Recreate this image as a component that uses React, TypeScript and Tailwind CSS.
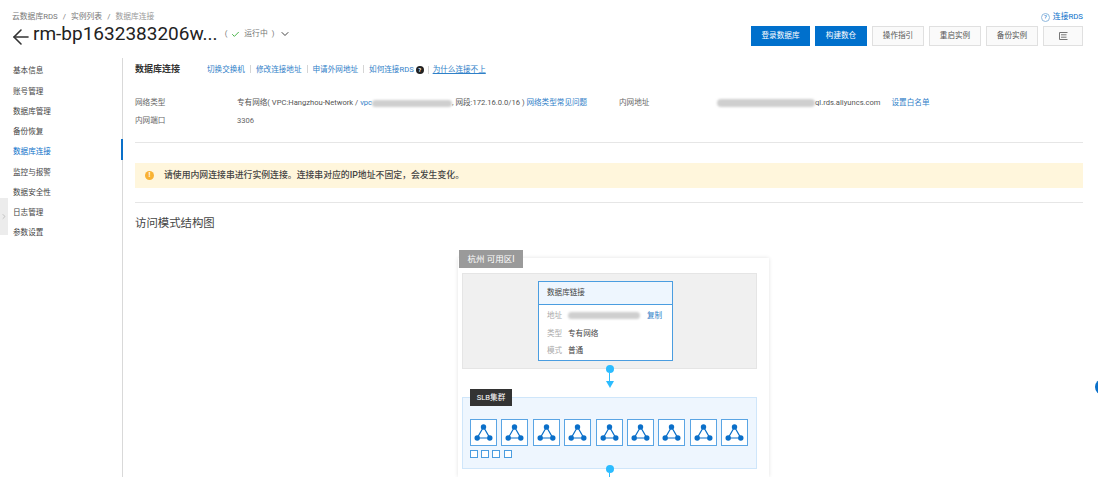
import { ArrowLeft, Check, ChevronDown, ChevronRight } from 'lucide-react';

const FONT = "font-['Roboto','Noto_Sans_CJK_SC',sans-serif]";

const menuItems = ['基本信息', '账号管理', '数据库管理', '备份恢复', '数据库连接', '监控与报警', '数据安全性', '日志管理', '参数设置'];
const headerButtons = ['操作指引', '重启实例', '备份实例'];
const tabLinks = ['切换交换机', '修改连接地址', '申请外网地址'];

const Redacted = ({ className }: { className: string }) => (
  <span className={`inline-block rounded-full bg-[#cfcfcf] blur-[1px] ${className}`} />
);

const ClusterIcon = () => (
  <div className="flex h-[27px] w-[27px] items-center justify-center border border-[#5aa5e4] bg-white">
    <svg width="19" height="19" viewBox="0 0 19 19" fill="none">
      <path d="M9.5 4 L3.2 15 H15.8 Z" stroke="#0a6fc9" strokeWidth="1.2" />
      <circle cx="9.5" cy="4" r="2.7" fill="#0a6fc9" />
      <circle cx="3.2" cy="15" r="2.7" fill="#0a6fc9" />
      <circle cx="15.8" cy="15" r="2.7" fill="#0a6fc9" />
    </svg>
  </div>
);

const Connector = ({ arrow }: { arrow?: boolean }) => (
  <div className="relative z-10 -mt-[4px] flex w-[295px] flex-col items-center">
    <div className="h-[8px] w-[8px] rounded-full bg-[#2bbcff]" />
    <div className="h-[8px] w-[1.5px] bg-[#2bbcff]" />
    {arrow && (
      <div className="h-0 w-0 border-x-[4px] border-t-[7px] border-x-transparent border-t-[#2bbcff]" />
    )}
  </div>
);

const DbRow = ({ label, children }: { label: string; children: React.ReactNode }) => (
  <div className="flex h-[17.5px] items-center">
    <span className="w-[20px] shrink-0 text-[#aaa]">{label}</span>
    {children}
  </div>
);

export default function App() {
  return (
    <div className={`relative h-[477px] w-[1098px] overflow-hidden bg-white text-[#555] ${FONT}`}>
      <header className="relative h-[58px] pl-[12px] pr-[15px]">
        <div className="flex items-center pt-[12px] text-[7.8px] leading-[10px] text-[#777]">
          <span>云数据库RDS</span>
          <span className="mx-[5px]">/</span>
          <span>实例列表</span>
          <span className="mx-[5px]">/</span>
          <span className="text-[#999]">数据库连接</span>
        </div>
        <div className="mt-[1px] flex h-[22px] items-center">
          <ArrowLeft size={24} strokeWidth={1.6} className="-ml-[3px] mt-[5px] shrink-0 text-[#333]" />
          <span className="text-[19px] leading-[22px] text-[#222]">rm-bp1632383206w...</span>
          <span className="ml-[7px] flex items-center text-[7.8px] text-[#777]">
            <span>(</span>
            <Check size={9} strokeWidth={2.5} className="mx-[4px] text-[#3dae3d]" />
            <span>运行中</span>
            <span className="ml-[4px]">)</span>
          </span>
          <ChevronDown size={12} className="ml-[5px] text-[#444]" />
        </div>
        <div className="absolute right-[15px] top-[12px] flex items-center text-[7.8px] leading-[10px] text-[#0a6fc9]">
          <span className="mr-[3px] flex h-[9px] w-[9px] items-center justify-center rounded-full border border-[#8fb8dd] text-[6px]">?</span>
          连接RDS
        </div>
        <div className="absolute right-[15px] top-[26px] flex gap-[5px] text-[7.6px]">
          <button className="h-[20px] w-[59px] bg-[#0070cc] text-white">登录数据库</button>
          <button className="h-[20px] w-[52px] bg-[#0070cc] text-white">构建数仓</button>
          {headerButtons.map((b) => (
            <button key={b} className="h-[20px] w-[52px] border border-[#e0e0e0] bg-[#fafafa] text-[#555]">
              {b}
            </button>
          ))}
          <button className="flex h-[20px] w-[40px] items-center justify-center border border-[#e0e0e0] bg-[#fafafa]">
            <svg width="9" height="8" viewBox="0 0 9 8" fill="none" stroke="#777" strokeWidth="1">
              <path d="M.5 .5 H8.5 M.5 .5 V7.5 H8.5 M2 2.8 H7.5 M2 5.2 H7.5" />
            </svg>
          </button>
        </div>
      </header>

      <div className="flex h-[419px]">
        <nav className="relative w-[123px] shrink-0 border-r border-[#d9d9d9] pl-[13px] pt-[3px] text-[7.6px] text-[#444]">
          {menuItems.map((item) => (
            <div
              key={item}
              className={`flex h-[20.25px] items-center ${item === '数据库连接' ? 'text-[#0a6fc9]' : ''}`}
            >
              {item}
            </div>
          ))}
          <div className="absolute right-[-1px] top-[81px] h-[21px] w-[2px] bg-[#0a70c9]" />
        </nav>

        <main className="flex-1 pl-[12px] pr-[15px]">
          <div className="flex h-[22px] items-center pt-[1px] text-[7.6px] text-[#2f80c8]">
            <span className="w-[72px] text-[9px] font-bold text-[#333]">数据库连接</span>
            {tabLinks.map((link) => (
              <span key={link} className="flex items-center">
                {link}
                <span className="mx-[5px] h-[8px] w-px bg-[#d5d5d5]" />
              </span>
            ))}
            <span>如何连接RDS</span>
            <span className="ml-[2px] flex h-[8px] w-[8px] items-center justify-center rounded-full bg-[#222] text-[6px] font-bold text-white">?</span>
            <span className="mx-[4px] h-[8px] w-px bg-[#d5d5d5]" />
            <span className="underline underline-offset-1">为什么连接不上</span>
          </div>

          <div className="mt-[14px] grid grid-cols-[102px_382px_98px_1fr] text-[7.6px] leading-[18px] text-[#666]">
            <span>网络类型</span>
            <span className="flex items-center whitespace-nowrap text-[#555]">
              专有网络( VPC:Hangzhou-Network /&nbsp;<span className="text-[#2f80c8]">vpc</span>
              <Redacted className="h-[7px] w-[80px]" />
              , 网段:172.16.0.0/16 )&nbsp;<span className="text-[#2f80c8]">网络类型常见问题</span>
            </span>
            <span>内网地址</span>
            <span className="flex items-center whitespace-nowrap text-[#555]">
              <Redacted className="h-[8px] w-[98px]" />
              ql.rds.aliyuncs.com
              <span className="ml-[11px] text-[#2f80c8]">设置白名单</span>
            </span>
            <span>内网端口</span>
            <span>3306</span>
          </div>

          <div className="mt-[12px] h-px bg-[#e6e6e6]" />

          <div className="mt-[20px] flex h-[25px] items-center bg-[#fff6dc] pl-[10px] text-[8.85px] font-medium text-[#444]">
            <span className="mr-[10px] flex h-[9px] w-[9px] items-center justify-center rounded-full bg-[#f9b233] text-[7px] font-bold text-white">!</span>
            请使用内网连接串进行实例连接。连接串对应的IP地址不固定，会发生变化。
          </div>

          <div className="mt-[14px] h-px bg-[#e6e6e6]" />

          <h2 className="mt-[12px] h-[16px] text-[11.4px] leading-[16px] text-[#444]">访问模式结构图</h2>

          <div className="relative ml-[323px] mt-[27px] h-[219px] w-[311px] bg-white px-[4px] pt-[15px] shadow-[0_0_4px_rgba(0,0,0,0.12)]">
            <div className="absolute left-[1px] top-[-8px] flex h-[18px] w-[64px] items-center justify-center bg-[#9a9a9a] text-[8.5px] text-white">
              杭州 可用区I
            </div>

            <div className="h-[96px] w-[295px] border border-[#e5e5e5] bg-[#f0f0f0] pl-[75px] pt-[7px]">
              <div className="h-[80px] w-[135px] border border-[#4a9de0] bg-white text-[7.6px]">
                <div className="flex h-[23px] items-center border-b border-[#4a9de0] bg-[#eef6fe] pl-[8px] text-[#444]">
                  数据库链接
                </div>
                <div className="px-[8px] pt-[2px]">
                  <DbRow label="地址">
                    <Redacted className="ml-[1px] h-[7px] w-[72px]" />
                    <span className="ml-[7px] text-[#2f80c8]">复制</span>
                  </DbRow>
                  <DbRow label="类型">
                    <span className="ml-[1px] text-[#444]">专有网络</span>
                  </DbRow>
                  <DbRow label="模式">
                    <span className="ml-[1px] text-[#444]">普通</span>
                  </DbRow>
                </div>
              </div>
            </div>

            <Connector arrow />

            <div className="relative z-0 mt-[9px] h-[72px] w-[295px] border border-[#cfe6fa] bg-[#eef6fe] pl-[7px] pt-[21px]">
              <div className="absolute left-[7px] top-[-9px] flex h-[17px] w-[42px] items-center justify-center bg-[#333] text-[7.6px] text-white">
                SLB集群
              </div>
              <div className="flex gap-[4.4px]">
                {Array.from({ length: 9 }, (_, i) => (
                  <ClusterIcon key={i} />
                ))}
              </div>
              <div className="mt-[4px] flex gap-[3.2px]">
                {Array.from({ length: 4 }, (_, i) => (
                  <div key={i} className="h-[8px] w-[8px] border border-[#4a9de0] bg-white" />
                ))}
              </div>
            </div>

            <Connector />
          </div>
        </main>
      </div>

      <div className="absolute left-0 top-[198px] flex h-[37px] w-[8px] items-center justify-center bg-[#ececec]">
        <ChevronRight size={9} className="text-[#aaa]" />
      </div>
      <div className="absolute left-[1095px] top-[379px] h-[16px] w-[16px] rounded-full bg-[#0a70c9]" />
    </div>
  );
}
